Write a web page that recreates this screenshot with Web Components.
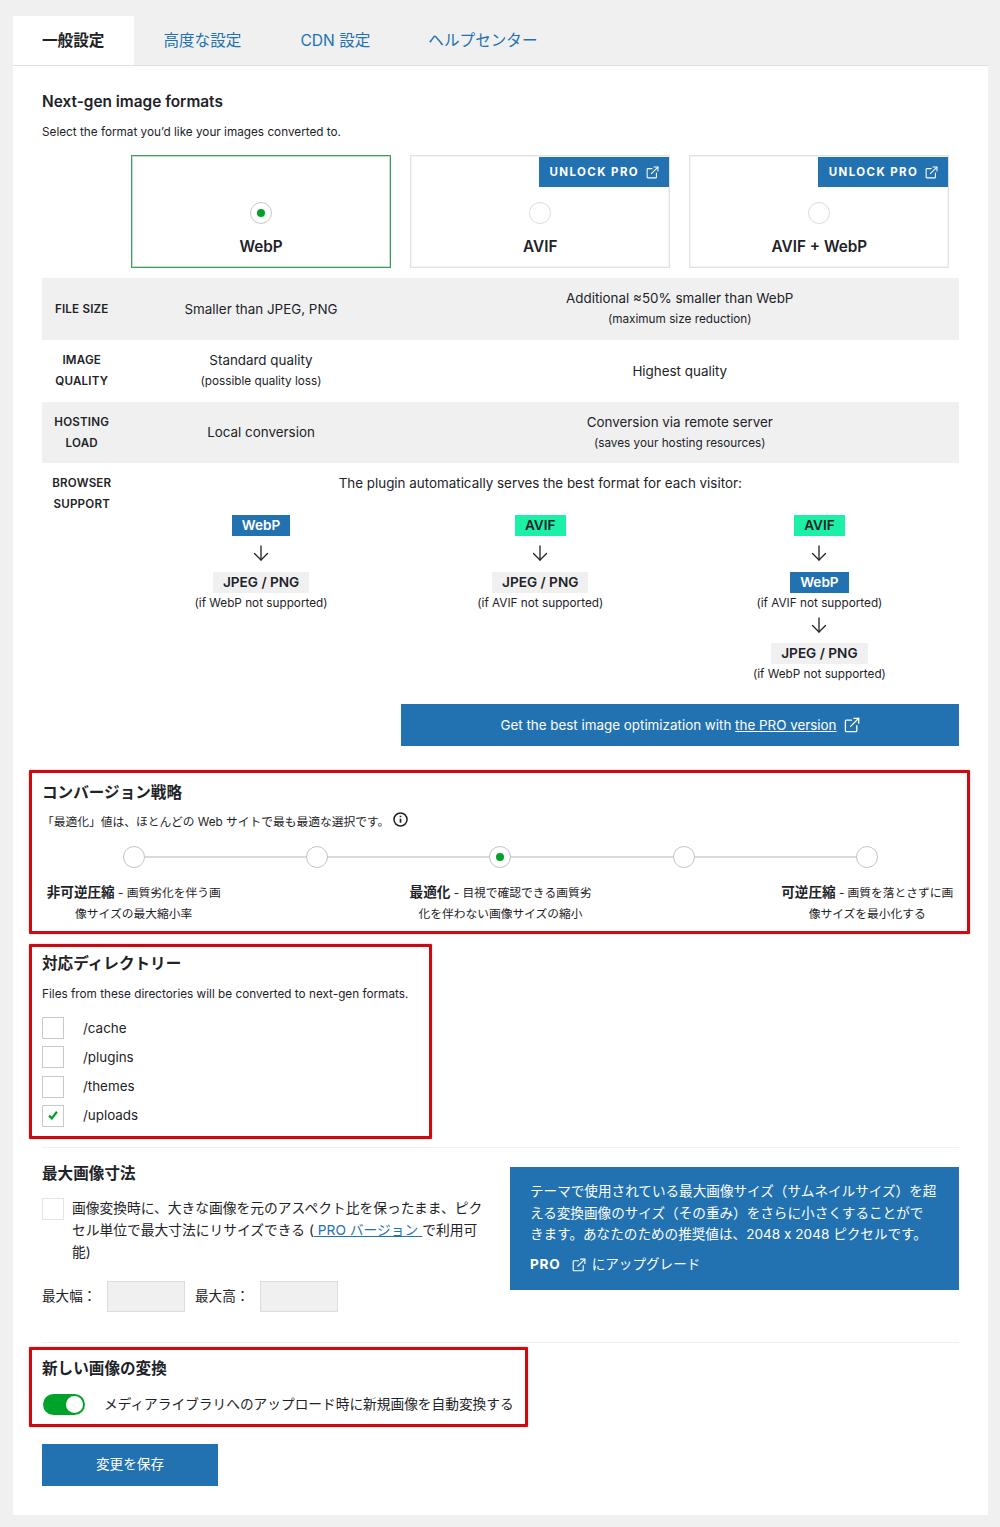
<!DOCTYPE html>
<html lang="ja">
<head>
<meta charset="utf-8">
<title>一般設定</title>
<style>
  html, body { margin: 0; background: #f0f0f1; }
  body { font: 13.4px/21px Inter, "Noto Sans CJK JP", sans-serif; color: #1d2327; }
  a { color: inherit; }
</style>
</head>
<body>
<wp-page>
  <wp-tabs slot="tabs">
    <wp-tab active>一般設定</wp-tab>
    <wp-tab>高度な設定</wp-tab>
    <wp-tab style="margin-left: 1px;">CDN 設定</wp-tab>
    <wp-tab>ヘルプセンター</wp-tab>
  </wp-tabs>

  <section-head top="25" latin label="Next-gen image formats">Select the format you’d like your images converted to.</section-head>

  <format-cards>
    <format-card checked>WebP</format-card>
    <format-card pro>AVIF</format-card>
    <format-card pro>AVIF + WebP</format-card>
  </format-cards>

  <compare-row shaded>
    <span slot="label">FILE SIZE</span>
    <span slot="a">Smaller than JPEG, PNG</span>
    <span slot="b">Additional ≈50% smaller than WebP<small-note>(maximum size reduction)</small-note></span>
  </compare-row>
  <compare-row>
    <span slot="label">IMAGE<br>QUALITY</span>
    <span slot="a">Standard quality<small-note>(possible quality loss)</small-note></span>
    <span slot="b">Highest quality</span>
  </compare-row>
  <compare-row shaded style="height: 61px;">
    <span slot="label">HOSTING<br>LOAD</span>
    <span slot="a">Local conversion</span>
    <span slot="b">Conversion via remote server<small-note>(saves your hosting resources)</small-note></span>
  </compare-row>
  <browser-support>
    <fallback-flow>
      <format-badge kind="webp">WebP</format-badge>
      <down-arrow></down-arrow>
      <format-badge kind="legacy">JPEG / PNG</format-badge>
      <small-note>(if WebP not supported)</small-note>
    </fallback-flow>
    <fallback-flow>
      <format-badge kind="avif">AVIF</format-badge>
      <down-arrow></down-arrow>
      <format-badge kind="legacy">JPEG / PNG</format-badge>
      <small-note>(if AVIF not supported)</small-note>
    </fallback-flow>
    <fallback-flow>
      <format-badge kind="avif">AVIF</format-badge>
      <down-arrow></down-arrow>
      <format-badge kind="webp">WebP</format-badge>
      <small-note>(if AVIF not supported)</small-note>
      <down-arrow short></down-arrow>
      <format-badge kind="legacy">JPEG / PNG</format-badge>
      <small-note>(if WebP not supported)</small-note>
    </fallback-flow>
  </browser-support>

  <pro-banner>Get the best image optimization with&nbsp;<a href="#">the PRO version</a><ext-icon size="16"></ext-icon></pro-banner>

  <red-box style="margin: 24px -11px 0 -13px; padding: 9px 8px 6px 10px;">
    <section-head label="コンバージョン戦略" gap="9">「最適化」値は、ほとんどの Web サイトで最も最適な選択です。<info-icon></info-icon></section-head>
    <level-slider value="2">
      <level-label slot="l0" name="非可逆圧縮">画質劣化を伴う画<br>像サイズの最大縮小率</level-label>
      <level-label slot="l2" name="最適化">目視で確認できる画質劣<br>化を伴わない画像サイズの縮小</level-label>
      <level-label slot="l4" name="可逆圧縮">画質を落とさずに画<br>像サイズを最小化する</level-label>
    </level-slider>
  </red-box>

  <red-box style="margin: 10px 0 0 -13px; width: 403px; padding: 6px 10px 9px;">
    <section-head label="対応ディレクトリー" gap="10">Files from these directories will be converted to next-gen formats.</section-head>
    <dir-list>
      <dir-check>/cache</dir-check>
      <dir-check>/plugins</dir-check>
      <dir-check>/themes</dir-check>
      <dir-check checked>/uploads</dir-check>
    </dir-list>
  </red-box>

  <hr-line style="margin-top: 8px;"></hr-line>

  <max-size>
    <span slot="title">最大画像寸法</span>
    画像変換時に、大きな画像を元のアスペクト比を保ったまま、ピク<br>セル単位で最大寸法にリサイズできる (<a href="#" style="color:#2271b1"> PRO バージョン </a>で利用可<br>能)
    <span slot="note">テーマで使用されている最大画像サイズ（サムネイルサイズ）を超<br>える変換画像のサイズ（その重み）をさらに小さくすることがで<br>きます。あなたのための推奨値は、2048 x 2048 ピクセルです。</span>
  </max-size>

  <hr-line style="margin-top: 30px;"></hr-line>

  <red-box style="margin: 4px 0 0 -13px; width: 499px; padding: 8px 10px 9px;">
    <section-head label="新しい画像の変換"></section-head>
    <toggle-row checked>メディアライブラリへのアップロード時に新規画像を自動変換する</toggle-row>
  </red-box>

  <save-button>変更を保存</save-button>
</wp-page>

<script>
function define(name, html, extra) {
  const template = document.createElement("template");
  template.innerHTML = html;
  class Element extends HTMLElement {
    constructor() {
      super();
      this.attachShadow({ mode: "open" }).appendChild(template.content.cloneNode(true));
    }
    connectedCallback() {
      if (extra) extra.call(this, this.shadowRoot);
    }
  }
  customElements.define(name, Element);
}

const extIcon = (size) => `<svg width="${size}" height="${size}" viewBox="0 0 16 16" fill="none" stroke="currentColor" stroke-width="1.3" stroke-linecap="round" stroke-linejoin="round"><path d="M7.5 3.2H2.2a.8.8 0 0 0-.8.8v9.8a.8.8 0 0 0 .8.8H12a.8.8 0 0 0 .8-.8V8.6"/><path d="M9.8 1.3h4.9v4.9"/><path d="M14.7 1.3 6.6 9.4"/></svg>`;

define("wp-page", `
<style>
  :host { display: block; padding: 16px 12px 13px 13px; }
  .panel { background: #fff; border-top: 1px solid #e0e0e2; padding: 0 29px 29px; }
</style>
<slot name="tabs"></slot>
<div class="panel"><slot></slot></div>
`);

define("wp-tabs", `
<style>
  :host { display: flex; height: 49px; }
</style>
<slot></slot>
`);

define("wp-tab", `
<style>
  :host { display: flex; align-items: center; padding: 0 29px; font-size: 15.6px; color: #2271b1; white-space: nowrap; }
  :host([active]) { background: #fff; color: #1d2327; font-weight: 600; padding-right: 30px; }
</style>
<slot></slot>
`);

define("section-head", `
<style>
  :host { display: block; }
  :host([latin]) h2 { font-size: 15.4px; }
  h2 { margin: 0; font-size: 15.6px; line-height: 22px; font-weight: 600; }
  p { margin: 10px 0 0; font-size: 11.76px; line-height: 18px; display: flex; align-items: center; }
</style>
<h2></h2>
<p><slot></slot></p>
`, function (root) {
  root.querySelector("h2").textContent = this.getAttribute("label");
  if (this.hasAttribute("top")) this.style.paddingTop = this.getAttribute("top") + "px";
  if (this.hasAttribute("gap")) root.querySelector("p").style.marginTop = this.getAttribute("gap") + "px";
  if (!this.textContent.trim()) root.querySelector("p").style.display = "none";
});

define("format-cards", `
<style>
  :host { display: grid; grid-template-columns: repeat(3, 1fr); margin: 14px 0 10px 79.5px; }
</style>
<slot></slot>
`);

define("format-card", `
<style>
  :host { display: block; margin: 0 9.5px; position: relative; height: 113px; box-sizing: border-box; border: 1px solid #e2e2e3; box-shadow: inset 0 0 0 1px #f3f3f4; background: #fff; text-align: center; }
  :host([checked]) { border-color: #3f9f58; box-shadow: inset 0 0 0 1px rgba(76, 167, 100, .35); }
  .radio { display: block; box-sizing: border-box; width: 22px; height: 22px; margin: 46px auto 0; border: 1px solid #dcdcde; border-radius: 50%; position: relative; }
  :host([checked]) .radio { border-color: #c9c9cb; }
  :host([checked]) .radio::after { content: ""; position: absolute; left: 6px; top: 6px; width: 8px; height: 8px; border-radius: 50%; background: #00a32a; }
  .name { margin-top: 12px; font-size: 15.3px; line-height: 22px; font-weight: 600; }
  .pro { display: none; position: absolute; right: 0; top: 1px; width: 130px; height: 30px; background: #2271b1; color: #fff; font-size: 11.5px; font-weight: 700; letter-spacing: 1.4px; align-items: center; justify-content: center; gap: 7px; }
  :host([pro]) .pro { display: flex; }
</style>
<div class="pro">UNLOCK PRO ${extIcon(13)}</div>
<span class="radio"></span>
<div class="name"><slot></slot></div>
`);

define("small-note", `
<style>
  :host { display: block; font-size: 11.76px; line-height: 21px; }
</style>
<slot></slot>
`);

define("compare-row", `
<style>
  :host { display: grid; grid-template-columns: 79.5px 279px 1fr; height: 62px; align-items: center; text-align: center; }
  :host([shaded]) { background: #f0f0f1; }
  .label { font-size: 11.6px; line-height: 21px; font-weight: 600; letter-spacing: .2px; }
</style>
<div class="label"><slot name="label"></slot></div>
<div><slot name="a"></slot></div>
<div><slot name="b"></slot></div>
`);

define("browser-support", `
<style>
  :host { display: grid; grid-template-columns: 79.5px 1fr; text-align: center; padding-top: 10px; }
  .label { font-size: 11.6px; line-height: 21px; font-weight: 600; letter-spacing: .2px; }
  .flows { display: grid; grid-template-columns: repeat(3, 1fr); margin-top: 21px; }
</style>
<div class="label">BROWSER<br>SUPPORT</div>
<div>
  <div>The plugin automatically serves the best format for each visitor:</div>
  <div class="flows"><slot></slot></div>
</div>
`);

define("fallback-flow", `
<style>
  :host { display: flex; flex-direction: column; align-items: center; }
</style>
<slot></slot>
`);

define("format-badge", `
<style>
  :host { display: block; height: 21px; line-height: 21px; padding: 0 10px; font-size: 13.6px; font-weight: 600; }
  :host([kind="webp"]) { background: #2271b1; color: #fff; }
  :host([kind="avif"]) { background: #1bf0a6; color: #1d2327; }
  :host([kind="legacy"]) { background: #f0f0f1; color: #1d2327; }
</style>
<slot></slot>
`);

define("down-arrow", `
<style>
  :host { display: flex; align-items: center; justify-content: center; box-sizing: border-box; height: 35.5px; padding-bottom: 2px; }
  :host([short]) { height: 29.5px; padding-bottom: 6px; }
  svg { display: block; }
</style>
<svg width="16" height="16" viewBox="0 0 16 16" fill="none" stroke="#1d2327" stroke-width="1.3" stroke-linecap="round" stroke-linejoin="round"><path d="M8 1v14"/><path d="M1.5 8.5 8 15l6.500-6.500"/></svg>
`);

define("ext-icon", `
<style>
  :host { display: inline-flex; margin-left: 7px; }
  span { display: flex; }
</style>
<span></span>
`, function (root) {
  root.querySelector("span").innerHTML = extIcon(this.getAttribute("size") || 14);
});

define("pro-banner", `
<style>
  :host { display: flex; align-items: center; justify-content: center; margin: 19px 0 0 359px; height: 42px; background: #2271b1; color: #fff; font-size: 13.4px; white-space: nowrap; }
  ::slotted(a) { color: #fff; text-decoration: underline; }
</style>
<slot></slot>
`);

define("red-box", `
<style>
  :host { display: block; border: 3px solid #cc0a10; border-radius: 1px; box-sizing: border-box; box-shadow: 0 0 1px #cc0a10; }
</style>
<slot></slot>
`);

define("info-icon", `
<style>
  :host { display: inline-flex; margin: -6px 0 0 4px; }
</style>
<svg width="15" height="15" viewBox="0 0 15 15" fill="none" stroke="#1d2327"><circle cx="7.500" cy="7.500" r="6.500" stroke-width="1.500"/><path d="M7.500 6.700v4" stroke-width="1.700"/><path d="M7.500 3.700v1.500" stroke-width="1.700"/></svg>
`);

define("level-slider", `
<style>
  :host { display: block; }
  .track { position: relative; display: grid; grid-template-columns: repeat(5, 1fr); margin-top: 15px; justify-items: center; }
  .track::before { content: ""; position: absolute; left: 10%; right: 10%; top: 10px; height: 2px; background: #dadadc; }
  .dot { position: relative; box-sizing: border-box; width: 22px; height: 22px; border-radius: 50%; background: #fff; border: 1px solid #c4c4c6; }
  .dot.on::after { content: ""; position: absolute; left: 6px; top: 6px; width: 8px; height: 8px; border-radius: 50%; background: #00a32a; }
  .labels { display: grid; grid-template-columns: repeat(5, 1fr); margin-top: 14px; }
  .labels slot { display: block; }
  .wide { grid-column: 3; }
  .end { grid-column: 5; }
</style>
<div class="track"></div>
<div class="labels">
  <slot name="l0"></slot>
  <slot class="wide" name="l2"></slot>
  <slot class="end" name="l4"></slot>
</div>
`, function (root) {
  const value = Number(this.getAttribute("value"));
  const track = root.querySelector(".track");
  for (let i = 0; i < 5; i++) {
    const dot = document.createElement("span");
    dot.className = i === value ? "dot on" : "dot";
    track.appendChild(dot);
  }
});

define("level-label", `
<style>
  :host { display: block; text-align: center; font-size: 11.76px; line-height: 21px; white-space: nowrap; }
  b { font-size: 13.6px; font-weight: 600; }
  .in { margin: 0 -40px; }
</style>
<div class="in"><b></b> - <slot></slot></div>
`, function (root) {
  root.querySelector("b").textContent = this.getAttribute("name");
});

define("dir-list", `
<style>
  :host { display: grid; row-gap: 7.33px; margin-top: 14px; }
</style>
<slot></slot>
`);

const checkBox = `
  .box { flex: none; box-sizing: border-box; width: 22px; height: 22px; border: 1px solid #c9c9cb; background: #fff; display: flex; align-items: center; justify-content: center; }
`;

define("dir-check", `
<style>
  :host { display: flex; align-items: center; gap: 19px; height: 22px; font-size: 13.4px; }
  ${checkBox}
  svg { display: none; }
  :host([checked]) svg { display: block; }
</style>
<span class="box"><svg width="10" height="9" viewBox="0 0 12 11" fill="none" stroke="#00a32a" stroke-width="2.800"><path d="M1.200 5.700 4.500 9 10.800 1"/></svg></span>
<slot></slot>
`);

define("hr-line", `
<style>
  :host { display: block; height: 1px; background: #f0f0f1; }
</style>
`);

define("max-size", `
<style>
  :host { display: grid; grid-template-columns: 440px 449px; column-gap: 28px; margin-top: 15px; }
  h2 { margin: 0; font-size: 15.6px; line-height: 22px; font-weight: 600; }
  .opt { display: flex; gap: 8px; margin-top: 12px; font-size: 13.75px; line-height: 22px; white-space: nowrap; }
  ${checkBox}
  .box { border-color: #e4e4e6; margin-top: 1px; }
  .sizes { display: flex; align-items: center; margin-top: 18px; font-size: 13.6px; }
  .sizes span { width: 65px; }
  .sizes span + i + span { margin-left: 10px; }
  i { display: block; box-sizing: border-box; width: 78px; height: 31px; background: #f0f0f1; border: 1px solid #dcdcde; }
  .note { margin-top: 4px; height: 123px; box-sizing: border-box; padding: 14px 20px 0; background: #2271b1; color: #fff; font-size: 13.6px; line-height: 21.6px; white-space: nowrap; }
  .up { display: flex; align-items: center; margin-top: 8px; }
  .up b { font-weight: 700; letter-spacing: .8px; margin-right: 11px; }
  .up svg { margin-right: 6px; }
</style>
<div>
  <h2><slot name="title"></slot></h2>
  <div class="opt"><span class="box"></span><div><slot></slot></div></div>
  <div class="sizes"><span>最大幅：</span><i></i><span>最大高：</span><i></i></div>
</div>
<div class="note">
  <slot name="note"></slot>
  <div class="up"><b>PRO</b>${extIcon(14)}にアップグレード</div>
</div>
`);

define("toggle-row", `
<style>
  :host { display: flex; align-items: center; gap: 19px; margin-top: 14px; padding-left: 1px; font-size: 13.7px; white-space: nowrap; }
  .switch { flex: none; position: relative; width: 42px; height: 21px; border-radius: 11px; background: #00a32a; }
  .switch::after { content: ""; position: absolute; right: 2px; top: 2px; width: 17px; height: 17px; border-radius: 50%; background: #fff; }
</style>
<span class="switch"></span>
<slot></slot>
`);

define("save-button", `
<style>
  :host { display: flex; align-items: center; justify-content: center; width: 176px; height: 42px; margin-top: 17px; background: #2271b1; color: #fff; font-size: 13.6px; }
</style>
<slot></slot>
`);
</script>
</body>
</html>
